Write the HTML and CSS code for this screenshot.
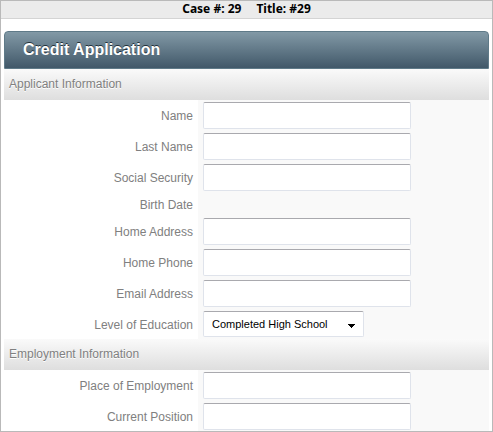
FILE: index.html
```html
<!DOCTYPE html>
<html lang="en">
<head>
<meta charset="utf-8">
<title>Credit Application</title>
<link rel="stylesheet" href="styles.css">
</head>
<body>
<div class="frame">
  <header class="case-bar"><span>Case #: 29</span><span>Title: #29</span></header>
  <form class="form">
    <h1 class="form-title">Credit Application</h1>
    <section class="group">
      <h2 class="group-title">Applicant Information</h2>
      <div class="row"><label class="label" for="name">Name</label><div class="field"><input class="text" id="name" type="text"></div></div>
      <div class="row"><label class="label" for="last">Last Name</label><div class="field"><input class="text" id="last" type="text"></div></div>
      <div class="row"><label class="label" for="ssn">Social Security</label><div class="field"><input class="text" id="ssn" type="text"></div></div>
      <div class="row row-empty"><span class="label">Birth Date</span><div class="field"></div></div>
      <div class="row"><label class="label" for="address">Home Address</label><div class="field"><input class="text" id="address" type="text"></div></div>
      <div class="row"><label class="label" for="phone">Home Phone</label><div class="field"><input class="text" id="phone" type="text"></div></div>
      <div class="row"><label class="label" for="email">Email Address</label><div class="field"><input class="text" id="email" type="text"></div></div>
      <div class="row"><label class="label" for="education">Level of Education</label><div class="field"><div class="select-wrap"><select class="select" id="education"><option>Completed High School</option></select><svg class="arrow" viewBox="0 0 7 4" aria-hidden="true"><path d="M0 0h7v1h-1v1h-1v1h-1v1h-1v-1h-1v-1h-1v-1h-1z"/></svg></div></div></div>
    </section>
    <section class="group">
      <h2 class="group-title">Employment Information</h2>
      <div class="row"><label class="label" for="employer">Place of Employment</label><div class="field"><input class="text" id="employer" type="text"></div></div>
      <div class="row"><label class="label" for="position">Current Position</label><div class="field"><input class="text" id="position" type="text"></div></div>
    </section>
  </form>
</div>
</body>
</html>
```
FILE: styles.css
```css
* {
  box-sizing: border-box;
}

body {
  margin: 0;
  background: #fff;
  color: #808080;
  font: 12px/15px "Liberation Sans", Arial, sans-serif;
}

.frame {
  min-height: 100vh;
  border: 1px solid #b9b9b9;
}

.case-bar {
  display: flex;
  justify-content: center;
  gap: 15px;
  height: 18px;
  border-bottom: 1px solid #d4d4d4;
  background: #ebebeb;
  color: #000;
  font: bold 12px/16px "Noto Sans", sans-serif;
}

.form {
  margin: 12px 3px 0;
}

.form-title {
  margin: 0;
  padding: 0 18px;
  border: 1px solid #5f7a88;
  border-radius: 4px 4px 0 0;
  background: linear-gradient(#8299a6, #415869);
  color: #fff;
  font-size: 16px;
  line-height: 36px;
  text-shadow: 0 -1px 0 #22303a;
}

.group-title {
  margin: 0;
  padding: 0 5px;
  background: linear-gradient(#fafafa, #dedede);
  font-size: 12px;
  font-weight: normal;
  line-height: 31px;
  text-shadow: 0 1px 0 #fff;
}

.row {
  display: flex;
}

.label {
  flex: 0 0 40%;
  align-self: center;
  padding: 2px 5px 0 0;
  text-align: right;
}

.field {
  flex: 1;
  padding: 2px 5px;
  background: #f9f9f9;
}

.row-empty {
  height: 23px;
}

.group:last-child .row:last-child .field {
  padding-bottom: 1px;
}

.text,
.select {
  display: block;
  border: 1px solid #dfe3eb;
  border-top-color: #a9a9ae;
  border-radius: 2px;
  background: #fff;
  color: #000;
  font: 11px "Liberation Sans", Arial, sans-serif;
}

.text {
  width: 208px;
  max-width: 100%;
  height: 27px;
  padding: 0 8px;
}

.select-wrap {
  position: relative;
  width: 161px;
}

.select {
  width: 100%;
  height: 26px;
  padding: 0 8px;
  appearance: none;
}

.arrow {
  position: absolute;
  top: 13px;
  right: 9px;
  width: 7px;
  height: 4px;
  pointer-events: none;
}
```
